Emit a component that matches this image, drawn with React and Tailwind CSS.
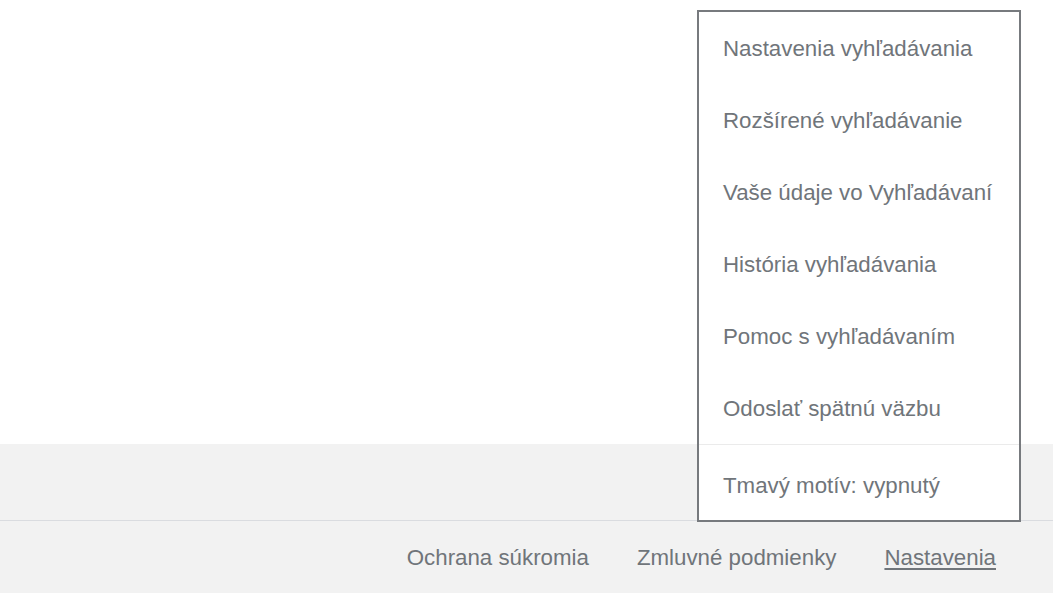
const menuItems = [
  'Nastavenia vyhľadávania',
  'Rozšírené vyhľadávanie',
  'Vaše údaje vo Vyhľadávaní',
  'História vyhľadávania',
  'Pomoc s vyhľadávaním',
  'Odoslať spätnú väzbu',
];

export default function App() {
  return (
    <div className="relative flex h-[593px] w-full flex-col overflow-hidden bg-white font-['Liberation_Sans',Arial,sans-serif] text-[#70757a]">
      {/* Page body */}
      <div className="h-[444px] bg-white" />

      {/* Footer upper band */}
      <div className="h-[76px] bg-[#f2f2f2]" />

      {/* Footer links */}
      <div className="flex h-[73px] items-center justify-end gap-12 border-t border-[#dadce0] bg-[#f2f2f2] pr-[57px] pt-[2px] text-[22.3px]">
        <a className="cursor-pointer">Ochrana súkromia</a>
        <a className="cursor-pointer">Zmluvné podmienky</a>
        <a className="cursor-pointer underline underline-offset-[3px]">Nastavenia</a>
      </div>

      {/* Settings dropdown */}
      <div className="absolute left-[697px] top-[10px] w-[324px] border-2 border-[#777a7e] bg-white">
        <ul className="flex flex-col">
          {menuItems.map((item) => (
            <li key={item} className="flex h-[72px] items-center whitespace-nowrap pl-[24px] pt-[2px] text-[22.3px]">
              {item}
            </li>
          ))}
        </ul>
        <div className="flex h-[76px] items-center border-t border-[#ebebeb] pl-[24px] pt-[6px] text-[22.3px]">
          Tmavý motív: vypnutý
        </div>
      </div>
    </div>
  );
}
